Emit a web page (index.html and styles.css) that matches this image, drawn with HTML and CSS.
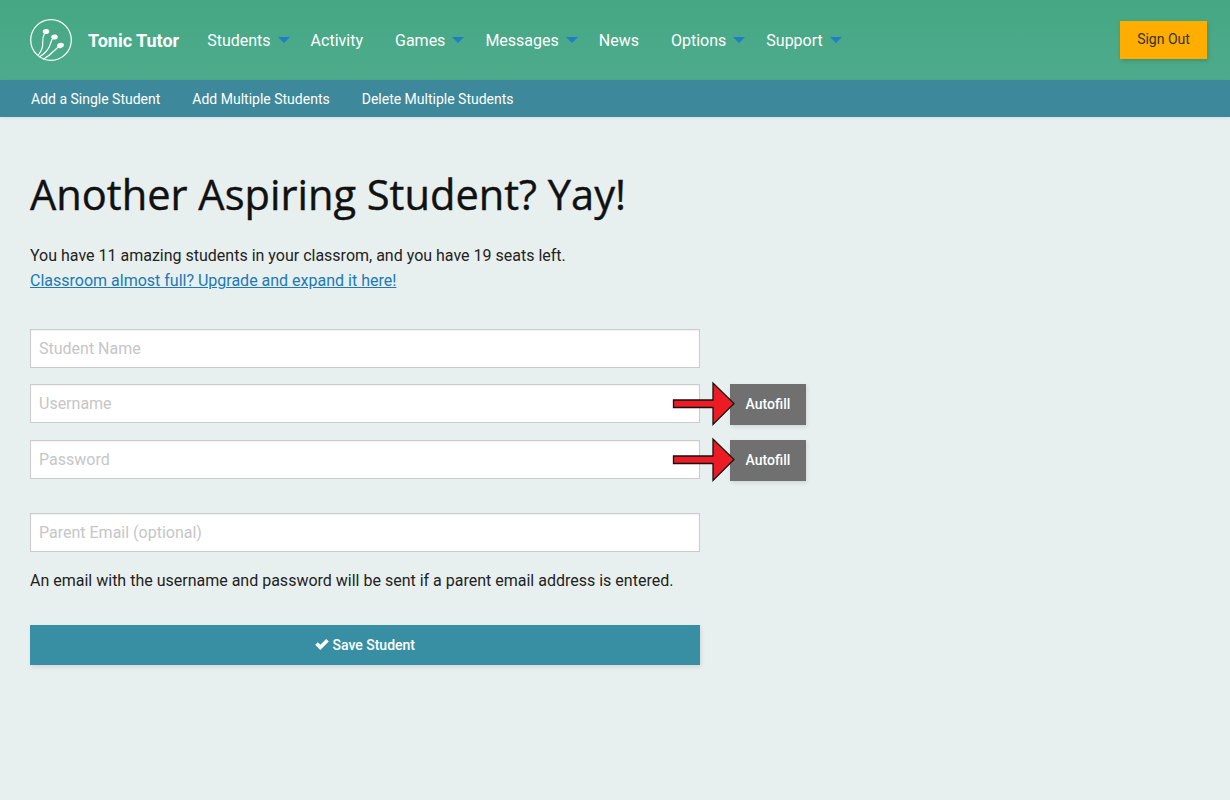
FILE: index.html
```html
<!DOCTYPE html>
<html lang="en">
<head>
<meta charset="UTF-8">
<title>Tonic Tutor</title>
<link rel="stylesheet" href="styles.css">
</head>
<body>

<header class="topbar">
    <a class="brand" href="#">
        <svg class="logo" width="44" height="44" viewBox="0 0 44 44" fill="none" stroke="#fff" stroke-width="1.2">
            <circle cx="22" cy="22" r="20.3"/>
            <path d="M9.300 37C12.500 33 14 29 13.700 25 13.400 21 14.500 17 16 14"/>
            <path d="M10.300 39C15 36 19.500 32 21 27 21.800 24.500 22.500 21.500 24.300 19.300"/>
            <path d="M14.300 41.300C19 38.500 23 35 26 32 27.500 30.500 29 29 31 28"/>
            <ellipse cx="17" cy="13.500" rx="3.300" ry="2.500" fill="#fff" stroke="none" transform="rotate(-10 17 13.500)"/>
            <ellipse cx="25.500" cy="19" rx="3.300" ry="2.500" fill="#fff" stroke="none" transform="rotate(-10 25.500 19)"/>
            <ellipse cx="31.500" cy="27.500" rx="3.500" ry="2.500" fill="#fff" stroke="none" transform="rotate(-15 31.500 27.500)"/>
        </svg>
        <span class="brand-name">Tonic Tutor</span>
    </a>
    <nav class="mainnav">
        <a class="has-menu" href="#">Students</a>
        <a href="#">Activity</a>
        <a class="has-menu" href="#">Games</a>
        <a class="has-menu" href="#">Messages</a>
        <a href="#">News</a>
        <a class="has-menu" href="#">Options</a>
        <a class="has-menu" href="#">Support</a>
    </nav>
    <a class="signout" href="#">Sign Out</a>
</header>

<nav class="subnav">
    <a href="#">Add a Single Student</a>
    <a href="#">Add Multiple Students</a>
    <a href="#">Delete Multiple Students</a>
</nav>

<main class="content">
    <h1>Another Aspiring Student? Yay!</h1>
    <p class="intro">You have 11 amazing students in your classrom, and you have 19 seats left.<br>
    <a href="#">Classroom almost full? Upgrade and expand it here!</a></p>

    <form class="student-form">
        <div class="row first">
            <input type="text" placeholder="Student Name">
        </div>
        <div class="row">
            <input type="text" placeholder="Username">
            <button type="button" class="autofill">Autofill</button>
            <svg class="arrow" width="66" height="46" viewBox="0 0 66 46">
                <path d="M1.500 19H41V2L62 22.500 41 43.500V26.500H1.500Z" fill="#ed1c24" stroke="#111" stroke-width="1.300"/>
            </svg>
        </div>
        <div class="row">
            <input type="text" placeholder="Password">
            <button type="button" class="autofill">Autofill</button>
            <svg class="arrow" width="66" height="46" viewBox="0 0 66 46">
                <path d="M1.500 19H41V2L62 22.500 41 43.500V26.500H1.500Z" fill="#ed1c24" stroke="#111" stroke-width="1.300"/>
            </svg>
        </div>
        <div class="row email">
            <input type="text" placeholder="Parent Email (optional)">
        </div>
        <p class="note">An email with the username and password will be sent if a parent email address is entered.</p>
        <button type="button" class="save">
            <svg width="14" height="11" viewBox="0 0 14 11"><path d="M0.200 5.800 2.800 3.200 5.300 5.700 11.200 0 13.800 2.600 5.300 11Z" fill="#fff"/></svg>
            Save Student
        </button>
    </form>
</main>

</body>
</html>
```

FILE: styles.css
```css
* {
    box-sizing: border-box;
}
html, body {
    height: 100%;
}
body {
    margin: 0;
    font-family: Roboto, "Liberation Sans", sans-serif;
    font-size: 16px;
    color: #222;
    background-color: #e8f0ef;
}
a {
    text-decoration: none;
}

.topbar {
    display: flex;
    align-items: center;
    height: 80px;
    padding: 0 23px 0 30px;
    background: linear-gradient(to bottom, #45a784, #4dab8c);
}
.brand {
    display: flex;
    align-items: center;
    color: #fff;
}
.logo {
    margin-left: -1px;
}
.brand-name {
    margin-left: 15px;
    font-size: 18px;
    font-weight: 700;
}
.mainnav {
    display: flex;
    margin-left: 28px;
}
.mainnav a {
    margin-right: 32px;
    color: #fff;
    white-space: nowrap;
}
.mainnav a.has-menu {
    margin-right: 21px;
}
.mainnav a.has-menu::after {
    content: "";
    display: inline-block;
    margin-left: 7px;
    vertical-align: 3px;
    border-style: solid;
    border-width: 6px 6px 0;
    border-color: #1f7fc4 transparent transparent;
}
.signout {
    margin-left: auto;
    width: 87px;
    height: 38px;
    line-height: 36px;
    text-align: center;
    font-size: 14px;
    color: #333;
    background-color: #ffae00;
    box-shadow: 1px 2px 4px rgba(0, 0, 0, 0.15);
}

.subnav {
    display: flex;
    gap: 32px;
    height: 37px;
    padding-left: 31px;
    align-items: center;
    background-color: #3d889b;
    box-shadow: 0 1px 3px rgba(0, 0, 0, 0.08);
}
.subnav a {
    font-size: 14px;
    color: #fff;
}

.content {
    padding: 0 30px;
}
h1 {
    margin: 50px 0 0;
    font-family: "Open Sans", sans-serif;
    font-size: 41.6px;
    font-weight: 400;
    -webkit-text-stroke: 0.4px #111;
    line-height: 54px;
    color: #111;
}
.intro {
    margin: 22px 0 0;
    line-height: 25px;
}
.intro a {
    color: #2079b5;
    text-decoration: underline;
}

.student-form {
    width: 776px;
}
.row {
    position: relative;
    display: flex;
    align-items: flex-start;
    height: 41px;
    margin-top: 15px;
}
.row.first {
    margin-top: 36px;
    height: 40px;
}
.row input {
    width: 670px;
    height: 39px;
    padding: 0 8px;
    font-family: Roboto, sans-serif;
    font-size: 16px;
    background-color: #fff;
    border: 1px solid #ccc;
    box-shadow: inset 0 1px 2px rgba(0, 0, 0, 0.06);
}
.row input::placeholder {
    color: #c6c6c6;
    opacity: 1;
}
.row.email {
    margin-top: 32px;
    height: 39px;
}
.autofill {
    width: 76px;
    height: 41px;
    margin-left: 30px;
    padding: 0 0 1px;
    font-family: Roboto, sans-serif;
    font-size: 14px;
    font-weight: 500;
    color: #fff;
    background-color: #707070;
    border: none;
    box-shadow: 1px 2px 4px rgba(0, 0, 0, 0.1);
}
.arrow {
    position: absolute;
    left: 642px;
    top: -3px;
}
.note {
    margin: 19px 0 0;
    line-height: 20px;
}
.save {
    display: block;
    width: 670px;
    height: 40px;
    margin-top: 34px;
    font-family: Roboto, sans-serif;
    font-size: 14px;
    font-weight: 500;
    color: #fff;
    background-color: #388fa3;
    border: none;
    box-shadow: 1px 2px 4px rgba(0, 0, 0, 0.1);
}
```
